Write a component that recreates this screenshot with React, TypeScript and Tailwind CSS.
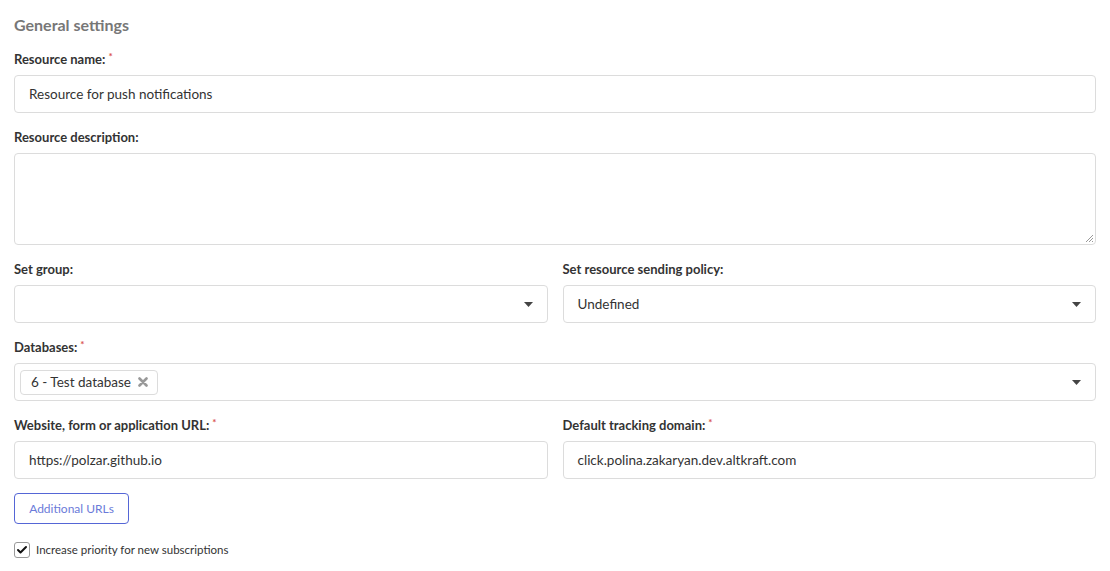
import { Check } from 'lucide-react';

function Label({ text, required }: { text: string; required?: boolean }) {
  return (
    <div className="mb-[8px] flex items-start text-[13px] font-bold leading-[16px] text-[#333]">
      <span>{text}</span>
      {required && <span className="ml-[3px] text-[10px] leading-[10px] text-[#d9534f]">*</span>}
    </div>
  );
}

function TextInput({ value }: { value?: string }) {
  return (
    <div className="flex h-[38px] items-center rounded-[4px] border border-[#dcdcdc] bg-white px-[14px] text-[13.5px] text-[#333]">
      {value}
    </div>
  );
}

function Select({ value }: { value?: string }) {
  return (
    <div className="flex h-[38px] items-center justify-between rounded-[4px] border border-[#dcdcdc] bg-white pl-[14px] pr-[14px] text-[13.5px] text-[#333]">
      <span>{value}</span>
      <Caret />
    </div>
  );
}

function Caret() {
  return (
    <svg width="9" height="5" viewBox="0 0 9 5">
      <path d="M0 0 H9 L4.5 5 Z" fill="#444" />
    </svg>
  );
}

export default function App() {
  return (
    <div className="min-h-screen bg-white px-[14px] pt-[15px]" style={{ fontFamily: 'Lato, "Noto Sans", sans-serif' }}>
      <h2 className="mb-[16px] text-[16px] font-bold leading-[20px] text-[#777]">General settings</h2>

      <div className="mb-[16px]">
        <Label text="Resource name:" required />
        <TextInput value="Resource for push notifications" />
      </div>

      <div className="mb-[16px]">
        <Label text="Resource description:" />
        <div className="relative h-[92px] rounded-[4px] border border-[#dcdcdc] bg-white">
          <svg className="absolute bottom-[2px] right-[2px]" width="8" height="8" viewBox="0 0 8 8">
            <path d="M8 1 L1 8 M8 4 L4 8 M8 7 L7 8" stroke="#999" strokeWidth="1" />
          </svg>
        </div>
      </div>

      <div className="mb-[16px] grid grid-cols-2 gap-[15px]">
        <div>
          <Label text="Set group:" />
          <Select />
        </div>
        <div>
          <Label text="Set resource sending policy:" />
          <Select value="Undefined" />
        </div>
      </div>

      <div className="mb-[16px]">
        <Label text="Databases:" required />
        <div className="flex h-[38px] items-center justify-between rounded-[4px] border border-[#dcdcdc] bg-white pl-[5px] pr-[14px]">
          <div className="flex h-[25px] items-center gap-[7px] rounded-[4px] border border-[#dcdcdc] pl-[10px] pr-[9px] text-[13.5px] text-[#333]">
            <span>6 - Test database</span>
            <svg width="10" height="10" viewBox="0 0 10 10">
              <path d="M1.5 1.5 L8.5 8.5 M8.5 1.5 L1.5 8.5" stroke="#999" strokeWidth="2.6" strokeLinecap="round" />
            </svg>
          </div>
          <Caret />
        </div>
      </div>

      <div className="mb-[14px] grid grid-cols-2 gap-[15px]">
        <div>
          <Label text="Website, form or application URL:" required />
          <TextInput value="https://polzar.github.io" />
        </div>
        <div>
          <Label text="Default tracking domain:" required />
          <TextInput value="click.polina.zakaryan.dev.altkraft.com" />
        </div>
      </div>

      <button className="mb-[17px] flex h-[31px] w-[115px] items-center justify-center rounded-[4px] border border-[#5566d6] bg-white text-[12px] text-[#6b7bd9]">
        Additional URLs
      </button>

      <label className="flex items-center gap-[6px] text-[11.5px] text-[#333]">
        <span className="flex h-[16px] w-[16px] items-center justify-center rounded-[3px] border border-[#999] bg-white">
          <Check size={12} strokeWidth={4} className="text-[#111]" />
        </span>
        Increase priority for new subscriptions
      </label>
    </div>
  );
}
